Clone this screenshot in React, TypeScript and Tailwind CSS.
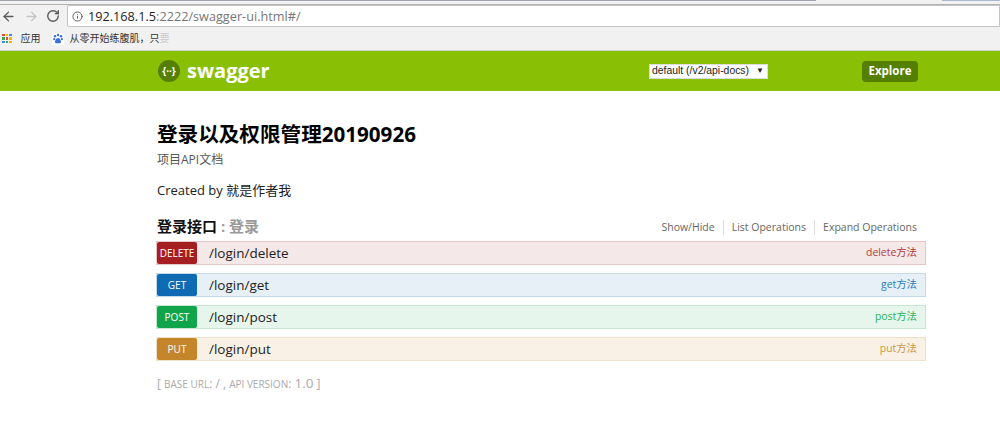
import { ArrowLeft, ArrowRight, Info, RotateCw } from 'lucide-react'

const ops = [
  { method: 'DELETE', path: '/login/delete', note: 'delete方法', row: 'bg-[#f5e8e8] border-[#e8c6c7]', badge: 'bg-[#a41e22]', text: 'text-[#b5383c]' },
  { method: 'GET', path: '/login/get', note: 'get方法', row: 'bg-[#e7f0f7] border-[#c3d9ec]', badge: 'bg-[#0f6ab4]', text: 'text-[#2a7cc0]' },
  { method: 'POST', path: '/login/post', note: 'post方法', row: 'bg-[#e7f6ec] border-[#c3e8d1]', badge: 'bg-[#10a54a]', text: 'text-[#2bb260]' },
  { method: 'PUT', path: '/login/put', note: 'put方法', row: 'bg-[#f9f1e6] border-[#f0e0ca]', badge: 'bg-[#c5862b]', text: 'text-[#cf9542]' },
]

const appColors = ['bg-[#e8453c]', 'bg-[#f4b400]', 'bg-[#4285f4]', 'bg-[#34a853]', 'bg-[#e8453c]', 'bg-[#f4b400]', 'bg-[#4285f4]', 'bg-[#34a853]', 'bg-[#f4b400]']

function BrowserChrome() {
  return (
    <div className="bg-[#f1f1f1]">
      <div className="h-[5px] border-b border-[#b3b3b3] bg-[#f1f1f1]">
        <div className="flex h-[1px]">
          <div className="w-[816px] bg-[#a0a4ab]" />
          <div className="w-[126px]" />
          <div className="flex-1 bg-[#a9b7d0]" />
        </div>
      </div>
      <div className="flex h-[22px] items-center bg-[#f1f1f1] pl-[1px]">
        <ArrowLeft className="h-[15px] w-[15px] text-[#5a5a5a]" strokeWidth={2.2} />
        <ArrowRight className="ml-[8px] h-[15px] w-[15px] text-[#c4c4c4]" strokeWidth={2.2} />
        <RotateCw className="ml-[7px] h-[14px] w-[14px] text-[#5a5a5a]" strokeWidth={2.4} />
        <div className="ml-[7px] flex h-[22px] flex-1 items-center rounded-l-[2px] border border-[#c4c4c4] bg-white pl-[4px]">
          <Info className="h-[11px] w-[11px] text-[#555]" strokeWidth={2} />
          <span className="ml-[5px] text-[12.7px] leading-none text-[#222]">
            192.168.1.5<span className="text-[#777]">:2222/swagger-ui.html#/</span>
          </span>
        </div>
      </div>
      <div className="flex h-[23px] items-center pl-[2px] text-[10px] text-[#333]">
        <div className="grid grid-cols-3 gap-[1px]">
          {appColors.map((c, i) => (
            <span key={i} className={`h-[2.5px] w-[2.5px] ${c}`} />
          ))}
        </div>
        <span className="ml-[9px]">应用</span>
        <div className="ml-[11px] flex h-[12px] w-[12px] items-center justify-center bg-white">
          <svg viewBox="0 0 12 12" className="h-[12px] w-[12px]">
            <circle cx="3" cy="3.2" r="1.2" fill="#3a6fe0" />
            <circle cx="6" cy="2" r="1.2" fill="#3a6fe0" />
            <circle cx="9" cy="3.2" r="1.2" fill="#3a6fe0" />
            <circle cx="2.2" cy="6.2" r="1.1" fill="#3a6fe0" />
            <circle cx="9.8" cy="6.2" r="1.1" fill="#3a6fe0" />
            <path d="M6 5C4.4 5 3.4 7 3 8.4 2.7 9.8 4 10.4 6 10.2 8 10.4 9.300 9.800 9 8.400 8.600 7 7.600 5 6 5Z" fill="#3a6fe0" />
          </svg>
        </div>
        <span className="ml-[6px] whitespace-nowrap">从零开始练腹肌，只<span className="text-[#ccc]">要</span></span>
      </div>
    </div>
  )
}

function Header() {
  return (
    <header className="flex h-[41px] items-center justify-between border-t border-[#cfcfcf] bg-[#89bf04] pl-[158px] pr-[82px]">
      <div className="flex items-center">
        <div className="flex h-[22px] w-[22px] items-center justify-center rounded-full bg-[#547f00] text-[10px] font-bold text-white">
          {'{··}'}
        </div>
        <span className="ml-[7px] text-[20px] font-bold leading-none text-white">swagger</span>
      </div>
      <div className="flex items-center">
        <div className="flex h-[15px] w-[119px] items-center justify-between border border-[#ddd] bg-white pl-[2px] pr-[3px] font-['Liberation_Sans',sans-serif] text-[10.4px] text-[#222]">
          <span className="whitespace-nowrap">default (/v2/api-docs)</span>
          <span className="text-[8px]">▼</span>
        </div>
        <div className="ml-[94px] flex h-[21px] w-[56px] items-center justify-center rounded-[4px] bg-[#547f00] text-[11.5px] font-bold text-white">
          Explore
        </div>
      </div>
    </header>
  )
}

export default function App() {
  return (
    <div className="h-[443px] w-[1000px] overflow-hidden bg-white font-['Open_Sans','Noto_Sans_CJK_SC',sans-serif]">
      <BrowserChrome />
      <Header />
      <main className="box-content w-[770px] pl-[156px] pt-[29px]">
        <div className="pl-[1px]">
          <h1 className="text-[20.6px] font-bold leading-[28px] text-black">登录以及权限管理20190926</h1>
          <p className="mt-[4px] text-[12px] leading-[15px] text-[#555]">项目API文档</p>
          <p className="mt-[15px] text-[13px] leading-[17px] text-[#222]">Created by 就是作者我</p>
        </div>
        <div className="mt-[16px] flex h-[22px] items-center justify-between pl-[1px] pr-[9px]">
          <h2 className="text-[15px] font-bold text-[#111]">
            登录接口<span className="text-[#999]"> : 登录</span>
          </h2>
          <div className="flex items-center pt-[3px] text-[10.5px] text-[#666]">
            <span className="border-r border-[#ddd] pr-[8px]">Show/Hide</span>
            <span className="border-r border-[#ddd] px-[8px]">List Operations</span>
            <span className="pl-[8px]">Expand Operations</span>
          </div>
        </div>
        <ul className="mt-[4px] flex flex-col gap-[8px]">
          {ops.map(op => (
            <li key={op.method} className={`flex h-[24px] items-center border pr-[8px] ${op.row}`}>
              <span className={`flex h-[22px] w-[40px] items-center justify-center rounded-[2px] text-[10px] text-white ${op.badge}`}>
                {op.method}
              </span>
              <span className="ml-[12px] text-[13.5px] text-[#222]">{op.path}</span>
              <span className={`ml-auto text-[10.4px] ${op.text}`}>{op.note}</span>
            </li>
          ))}
        </ul>
        <p className="mt-[12px] pl-[1px] text-[12px] text-[#aaa]">
          [ <span className="text-[10px] uppercase">base url</span>: / , <span className="text-[10px] uppercase">api version</span>: <span className="text-[13.5px]">1.0</span> ]
        </p>
      </main>
    </div>
  )
}
